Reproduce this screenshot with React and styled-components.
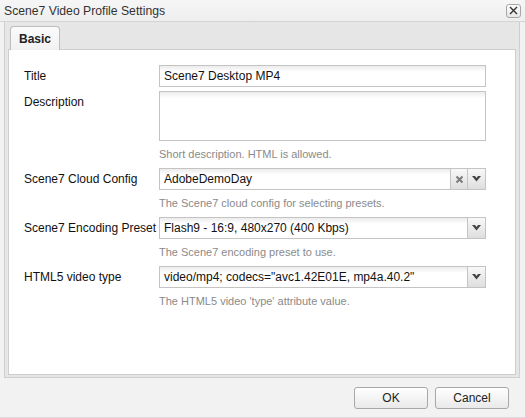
import styled, { createGlobalStyle } from "styled-components";

const GlobalStyle = createGlobalStyle`
  html, body {
    margin: 0;
    padding: 0;
    background: #f2f2f2;
  }
  body {
    font-family: "Liberation Sans", Arial, sans-serif;
    color: #111;
  }
`;

const Dialog = styled.div`
  width: 525px;
  height: 418px;
  display: flex;
  flex-direction: column;
  background: #f2f2f2;
  box-sizing: border-box;
  border-bottom: 1px solid #dcdcdc;
`;

const TitleBar = styled.div`
  height: 22px;
  flex: none;
  display: flex;
  align-items: center;
  justify-content: space-between;
  padding: 0 4px 0 4px;
  box-sizing: border-box;
  background: linear-gradient(#f6f6f6, #eeeeee);
  border-bottom: 1px solid #d4d4d4;
`;

const Title = styled.div`
  font-size: 12.2px;
  color: #333;
  margin-top: 1px;
`;

const CloseButton = styled.div`
  width: 15px;
  height: 14px;
  box-sizing: border-box;
  border: 1px solid #a6a6a6;
  border-radius: 3px;
  background: linear-gradient(#fdfdfd, #e6e6e6);
  display: flex;
  align-items: center;
  justify-content: center;
`;

const Panel = styled.div`
  margin: 0 5px 0 4px;
  border: 1px solid #cfcfcf;
  border-top: none;
  background: #e6e6e6;
  padding: 0 3px 2px 3px;
  display: flex;
  flex-direction: column;
  height: 356px;
  box-sizing: border-box;
`;

const TabStrip = styled.div`
  height: 27px;
  display: flex;
  align-items: flex-end;
  padding-left: 2px;
  flex: none;
`;

const Tab = styled.div`
  width: 50px;
  height: 24px;
  box-sizing: border-box;
  border: 1px solid #bdbdbd;
  border-bottom: none;
  border-radius: 4px 4px 0 0;
  background: linear-gradient(#fbfbfb, #f1f1f1);
  font-weight: bold;
  font-size: 12px;
  color: #222;
  display: flex;
  align-items: center;
  justify-content: center;
  margin-bottom: -1px;
  position: relative;
  z-index: 1;
`;

const Content = styled.div`
  flex: 1;
  background: #fff;
  border: 1px solid #cdcdcd;
  padding: 15px 29px 0 15px;
`;

const Row = styled.div`
  display: flex;
  align-items: flex-start;
  margin-bottom: ${(p) => p.$gap || 0}px;
`;

const Label = styled.div`
  width: 135px;
  flex: none;
  font-size: 12px;
  line-height: 22px;
  color: #111;
`;

const Field = styled.div`
  flex: 1;
  display: flex;
  flex-direction: column;
`;

const TextBox = styled.div`
  height: ${(p) => p.$h || 22}px;
  box-sizing: border-box;
  border: 1px solid #c4c4c4;
  background: linear-gradient(#ececec, #ffffff 6px);
  font-size: 12px;
  line-height: 20px;
  padding: 0 4px;
  color: #111;
  white-space: nowrap;
  overflow: hidden;
`;

const Combo = styled.div`
  height: 22px;
  box-sizing: border-box;
  border: 1px solid #c4c4c4;
  background: linear-gradient(#ececec, #ffffff 6px);
  display: flex;
  align-items: stretch;
`;

const ComboText = styled.div`
  flex: 1;
  font-size: 12px;
  line-height: 20px;
  padding: 0 4px;
  white-space: nowrap;
  overflow: hidden;
`;

const ComboButton = styled.div`
  width: ${(p) => p.$w || 17}px;
  border-left: 1px solid #c4c4c4;
  background: linear-gradient(#f8f8f8, #dedede);
  display: flex;
  align-items: center;
  justify-content: center;
`;

const Hint = styled.div`
  font-size: 11px;
  line-height: 14px;
  color: #8a8a8a;
  margin: 6px 0 7px;
`;

const Footer = styled.div`
  flex: 1;
  display: flex;
  justify-content: flex-end;
  align-items: flex-start;
  gap: 7px;
  padding: 9px 16px 0 0;
`;

const Button = styled.div`
  width: 74px;
  height: 22px;
  box-sizing: border-box;
  border: 1px solid #a8a8a8;
  border-radius: 3px;
  background: linear-gradient(#ffffff, #e9e9e9);
  font-size: 12px;
  color: #222;
  display: flex;
  align-items: center;
  justify-content: center;
`;

const Chevron = () => (
  <svg width="9" height="6" viewBox="0 0 9 6">
    <polygon points="0,0 3,0 4.5,2 6,0 9,0 4.5,5.5" fill="#444" />
  </svg>
);

const Clear = () => (
  <svg width="9" height="9" viewBox="0 0 9 9">
    <path d="M1.5 1.5 L7.5 7.5 M7.5 1.5 L1.5 7.5" stroke="#7a7a7a" strokeWidth="2" />
  </svg>
);

const Select = ({ value, clearable }) => (
  <Combo>
    <ComboText>{value}</ComboText>
    {clearable && (
      <ComboButton $w={16}>
        <Clear />
      </ComboButton>
    )}
    <ComboButton $w={17}>
      <Chevron />
    </ComboButton>
  </Combo>
);

export default function App() {
  return (
    <>
      <GlobalStyle />
      <Dialog>
        <TitleBar>
          <Title>Scene7 Video Profile Settings</Title>
          <CloseButton>
            <svg width="9" height="9" viewBox="0 0 9 9">
              <path d="M1 1 L8 8 M8 1 L1 8" stroke="#333" strokeWidth="1.4" />
            </svg>
          </CloseButton>
        </TitleBar>
        <Panel>
          <TabStrip>
            <Tab>Basic</Tab>
          </TabStrip>
          <Content>
            <Row $gap={4}>
              <Label>Title</Label>
              <Field>
                <TextBox>Scene7 Desktop MP4</TextBox>
              </Field>
            </Row>
            <Row>
              <Label>Description</Label>
              <Field>
                <TextBox $h={50} />
                <Hint>Short description. HTML is allowed.</Hint>
              </Field>
            </Row>
            <Row>
              <Label>Scene7 Cloud Config</Label>
              <Field>
                <Select value="AdobeDemoDay" clearable />
                <Hint>The Scene7 cloud config for selecting presets.</Hint>
              </Field>
            </Row>
            <Row>
              <Label>Scene7 Encoding Preset</Label>
              <Field>
                <Select value="Flash9 - 16:9, 480x270 (400 Kbps)" />
                <Hint>The Scene7 encoding preset to use.</Hint>
              </Field>
            </Row>
            <Row>
              <Label>HTML5 video type</Label>
              <Field>
                <Select value={'video/mp4; codecs="avc1.42E01E, mp4a.40.2"'} />
                <Hint>The HTML5 video 'type' attribute value.</Hint>
              </Field>
            </Row>
          </Content>
        </Panel>
        <Footer>
          <Button>OK</Button>
          <Button>Cancel</Button>
        </Footer>
      </Dialog>
    </>
  );
}
